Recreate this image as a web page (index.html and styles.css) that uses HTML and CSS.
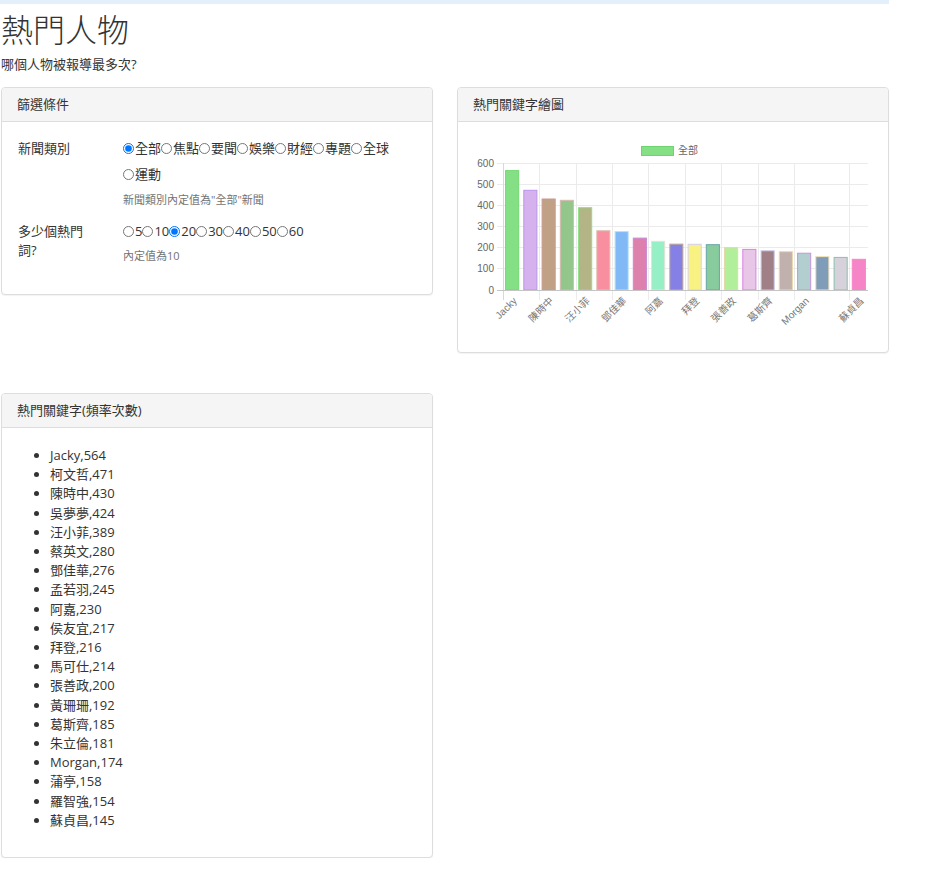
FILE: index.html
```html
<!DOCTYPE html>
<html lang="zh-Hant">
<head>
<meta charset="utf-8">
<title>熱門人物</title>
<link rel="stylesheet" href="styles.css">
</head>
<body>
<div class="topbar"></div>
<div class="page">
  <h1 class="title">熱門人物</h1>
  <p class="subtitle">哪個人物被報導最多次?</p>

  <div class="row">
    <div class="panel">
      <div class="panel-heading">篩選條件</div>
      <div class="panel-body filter-body">
        <div class="form-group">
          <div class="ctl-label">新聞類別</div>
          <div class="ctl">
            <div class="radios"><label class="ri"><input type="radio" name="cat" checked>全部</label><label class="ri"><input type="radio" name="cat">焦點</label><label class="ri"><input type="radio" name="cat">要聞</label><label class="ri"><input type="radio" name="cat">娛樂</label><label class="ri"><input type="radio" name="cat">財經</label><label class="ri"><input type="radio" name="cat">專題</label><label class="ri"><input type="radio" name="cat">全球</label><label class="ri"><input type="radio" name="cat">運動</label></div>
            <div class="help">新聞類別內定值為"全部"新聞</div>
          </div>
        </div>
        <div class="form-group last">
          <div class="ctl-label narrow">多少個熱門詞?</div>
          <div class="ctl">
            <div class="radios"><label class="ri"><input type="radio" name="num">5</label><label class="ri"><input type="radio" name="num">10</label><label class="ri"><input type="radio" name="num" checked>20</label><label class="ri"><input type="radio" name="num">30</label><label class="ri"><input type="radio" name="num">40</label><label class="ri"><input type="radio" name="num">50</label><label class="ri"><input type="radio" name="num">60</label></div>
            <div class="help help2">內定值為10</div>
          </div>
        </div>
      </div>
    </div>

    <div class="panel">
      <div class="panel-heading">熱門關鍵字繪圖</div>
      <div class="panel-body chart-body">
        <svg class="chart" width="399" height="200" viewBox="0 0 399 200" xmlns="http://www.w3.org/2000/svg">
          <!-- legend -->
          <rect x="168.5" y="9.5" width="32" height="9" fill="#85e085" stroke="#6dd56d" stroke-width="1"/>
          <text class="lbl" x="205" y="17">全部</text>
          <!-- horizontal grid -->
          <g stroke="#ebebeb" stroke-width="1">
            <line x1="24" y1="26.5" x2="395" y2="26.5"/>
            <line x1="24" y1="47.5" x2="395" y2="47.5"/>
            <line x1="24" y1="68.5" x2="395" y2="68.5"/>
            <line x1="24" y1="89.5" x2="395" y2="89.5"/>
            <line x1="24" y1="110.5" x2="395" y2="110.5"/>
            <line x1="24" y1="131.5" x2="395" y2="131.5"/>
          </g>
          <!-- vertical grid -->
          <g stroke="#ebebeb" stroke-width="1">
            <line x1="66.5" y1="26" x2="66.5" y2="163"/>
            <line x1="103.5" y1="26" x2="103.5" y2="163"/>
            <line x1="139.5" y1="26" x2="139.5" y2="163"/>
            <line x1="175.5" y1="26" x2="175.5" y2="163"/>
            <line x1="212.5" y1="26" x2="212.5" y2="163"/>
            <line x1="248.5" y1="26" x2="248.5" y2="163"/>
            <line x1="285.5" y1="26" x2="285.5" y2="163"/>
            <line x1="321.5" y1="26" x2="321.5" y2="163"/>
            <line x1="376.5" y1="26" x2="376.5" y2="163"/>
          </g>
          <line x1="30.5" y1="26" x2="30.5" y2="163" stroke="#d8d8d8" stroke-width="1"/>
          <!-- y labels -->
          <g class="lbl" text-anchor="end">
            <text x="21" y="29.5">600</text>
            <text x="21" y="50.5">500</text>
            <text x="21" y="71.5">400</text>
            <text x="21" y="92.5">300</text>
            <text x="21" y="113.5">200</text>
            <text x="21" y="134.5">100</text>
            <text x="21" y="156.5">0</text>
          </g>
          <!-- bars -->
          <g stroke-width="1">
            <rect x="32.6" y="33.6" width="13.1" height="119.4" fill="#85e085" stroke="#72d872"/>
            <rect x="50.8" y="53.3" width="13.1" height="99.7" fill="#d5b1ee" stroke="#bb94ea"/>
            <rect x="69.1" y="62.0" width="13.1" height="91.0" fill="#c1a185" stroke="#c89a8c"/>
            <rect x="87.3" y="63.3" width="13.1" height="89.7" fill="#92c68b" stroke="#d8b8b0"/>
            <rect x="105.6" y="70.7" width="13.1" height="82.3" fill="#b3b586" stroke="#88e283"/>
            <rect x="123.8" y="93.7" width="13.1" height="59.3" fill="#f78fa0" stroke="#e0c0b0"/>
            <rect x="142.1" y="94.6" width="13.1" height="58.4" fill="#80b9f6" stroke="#b8e2f8"/>
            <rect x="160.3" y="101.1" width="13.1" height="51.9" fill="#dd80ae" stroke="#c58ad6"/>
            <rect x="178.6" y="104.3" width="13.1" height="48.7" fill="#95f0c6" stroke="#e4e2d8"/>
            <rect x="196.8" y="107.1" width="13.1" height="45.9" fill="#8580e6" stroke="#c6ad8e"/>
            <rect x="215.1" y="107.3" width="13.1" height="45.7" fill="#f8f283" stroke="#d6cff0"/>
            <rect x="233.3" y="107.7" width="13.1" height="45.3" fill="#88cc9e" stroke="#66a4aa"/>
            <rect x="251.6" y="110.7" width="13.1" height="42.3" fill="#b2ef9b" stroke="#e5d6a6"/>
            <rect x="269.8" y="112.4" width="13.1" height="40.6" fill="#e8c6e7" stroke="#d884e0"/>
            <rect x="288.1" y="113.8" width="13.1" height="39.2" fill="#a07f86" stroke="#c8c8e8"/>
            <rect x="306.3" y="114.7" width="13.1" height="38.3" fill="#c0b0ae" stroke="#ecd8a8"/>
            <rect x="324.6" y="116.2" width="13.1" height="36.8" fill="#b3cecf" stroke="#c394dc"/>
            <rect x="342.8" y="119.6" width="13.1" height="33.4" fill="#7f9db9" stroke="#f0e2b8"/>
            <rect x="361.1" y="120.4" width="13.1" height="32.6" fill="#d7d1dc" stroke="#86c2a8"/>
            <rect x="379.3" y="122.3" width="13.1" height="30.7" fill="#f585c6" stroke="#f585c6"/>
          </g>
          <!-- zero line -->
          <line x1="24" y1="153.5" x2="395" y2="153.5" stroke="#c4c4c4" stroke-width="1"/>
          <!-- x labels -->
          <g class="lbl xl" text-anchor="end" dominant-baseline="central">
            <text transform="translate(42.1 162) rotate(-45)">Jacky</text>
            <text transform="translate(78.6 162) rotate(-45)">陳時中</text>
            <text transform="translate(115.1 162) rotate(-45)">汪小菲</text>
            <text transform="translate(151.6 162) rotate(-45)">鄧佳華</text>
            <text transform="translate(188.1 162) rotate(-45)">阿嘉</text>
            <text transform="translate(224.6 162) rotate(-45)">拜登</text>
            <text transform="translate(261.1 162) rotate(-45)">張善政</text>
            <text transform="translate(297.6 162) rotate(-45)">葛斯齊</text>
            <text transform="translate(334.1 162) rotate(-45)">Morgan</text>
            <text transform="translate(388.9 162) rotate(-45)">蘇貞昌</text>
          </g>
        </svg>
      </div>
    </div>
  </div>

  <div class="row row2">
    <div class="panel">
      <div class="panel-heading">熱門關鍵字(頻率次數)</div>
      <div class="panel-body list-body">
        <ul class="kw">
          <li>Jacky,564</li>
          <li>柯文哲,471</li>
          <li>陳時中,430</li>
          <li>吳夢夢,424</li>
          <li>汪小菲,389</li>
          <li>蔡英文,280</li>
          <li>鄧佳華,276</li>
          <li>孟若羽,245</li>
          <li>阿嘉,230</li>
          <li>侯友宜,217</li>
          <li>拜登,216</li>
          <li>馬可仕,214</li>
          <li>張善政,200</li>
          <li>黃珊珊,192</li>
          <li>葛斯齊,185</li>
          <li>朱立倫,181</li>
          <li>Morgan,174</li>
          <li>蒲亭,158</li>
          <li>羅智強,154</li>
          <li>蘇貞昌,145</li>
        </ul>
      </div>
    </div>
  </div>
</div>
</body>
</html>
```
FILE: styles.css
```css
html, body {
  margin: 0;
  padding: 0;
  background: #fff;
}
body {
  font-family: "Open Sans", "Noto Sans CJK TC", sans-serif;
  font-size: 13px;
  line-height: 19px;
  color: #333;
}
.topbar {
  width: 889px;
  height: 4px;
  background: #e3f0fb;
}
.page {
  width: 888px;
  padding-left: 1px;
}
.title {
  margin: 6px 0 0;
  font-size: 32px;
  line-height: 36px;
  font-weight: 300;
  color: #333;
  font-family: "Noto Sans CJK TC", sans-serif;
}
.subtitle {
  margin: 9px 0 0;
  line-height: 19px;
}
.row {
  margin-top: 13px;
  display: grid;
  grid-template-columns: 432px 432px;
  column-gap: 24px;
  align-items: start;
}
.row2 {
  margin-top: 40px;
}
.panel {
  border: 1px solid #ddd;
  border-radius: 4px;
  background: #fff;
  box-shadow: 0 1px 1px rgba(0, 0, 0, 0.05);
  overflow: hidden;
}
.panel-heading {
  background: #f5f5f5;
  border-bottom: 1px solid #ddd;
  padding: 7px 15px;
  line-height: 19px;
}
.filter-body {
  padding: 13px 15px 30px;
}
.form-group {
  display: grid;
  grid-template-columns: 106px 1fr;
  margin-bottom: 10px;
}
.form-group.last {
  margin-bottom: 0;
}
.ctl-label {
  padding-top: 3.5px;
  line-height: 19px;
  padding-left: 1px;
}
.ctl-label.narrow {
  max-width: 70px;
}
.radios {
  line-height: 26px;
}
.ri {
  white-space: nowrap;
}
.ri input {
  width: 11px;
  height: 11px;
  margin: 0 1px 0 0;
  vertical-align: -1px;
}
.help {
  margin-top: 5px;
  font-size: 11px;
  line-height: 16px;
  color: #737373;
}
.help2 {
  margin-top: 4px;
}
.chart-body {
  padding: 15px;
}
.chart {
  display: block;
}
.lbl {
  font-family: "Liberation Sans", "Noto Sans CJK TC", sans-serif;
  font-size: 10px;
  fill: #666;
}
.xl {
  fill: #777;
}
.list-body {
  padding: 15px;
}
.kw {
  margin: 3px 0 12px;
  padding-left: 33px;
}
.kw li {
  line-height: 19.2px;
}
```
